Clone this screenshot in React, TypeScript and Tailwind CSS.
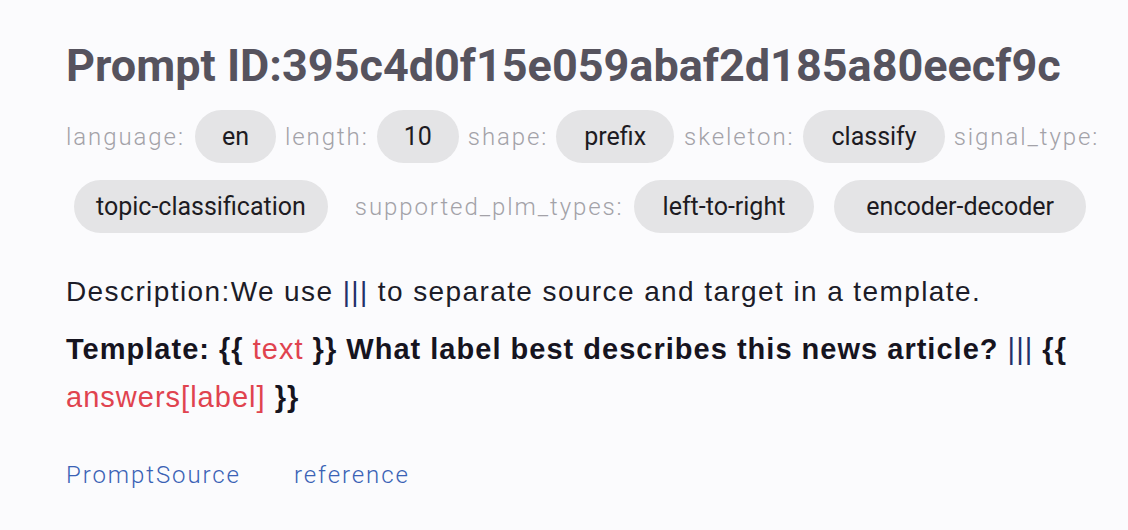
const Chip = ({ children, className = "px-[28px]" }: { children: React.ReactNode; className?: string }) => (
  <span
    className={`inline-flex h-[53px] items-center rounded-full bg-[#e4e4e6] text-[25px] text-[#1d1b22] ${className}`}
  >
    {children}
  </span>
);

const Label = ({ children, className = "" }: { children: React.ReactNode; className?: string }) => (
  <span className={`text-[24px] font-light tracking-[0.08em] text-[#a3a2a8] ${className}`}>
    {children}
  </span>
);

export default function App() {
  return (
    <div className="min-h-[530px] w-[1128px] bg-[#fbfbfd] pl-[66px] pt-[38px] font-['Roboto',sans-serif]">
      <h1 className="text-[45px] font-bold leading-[56px] text-[#56535e]">
        Prompt ID:395c4d0f15e059abaf2d185a80eecf9c
      </h1>

      {/* attributes */}
      <div className="mt-[16px] flex items-center">
        <Label>language:</Label>
        <Chip className="ml-[10px] px-[27px]">en</Chip>
        <Label className="ml-[9px]">length:</Label>
        <Chip className="ml-[8px] px-[27px]">10</Chip>
        <Label className="ml-[9px]">shape:</Label>
        <Chip className="ml-[8px] px-[28px]">prefix</Chip>
        <Label className="ml-[10px]">skeleton:</Label>
        <Chip className="ml-[9px] px-[28px]">classify</Chip>
        <Label className="ml-[9px]">signal_type:</Label>
      </div>
      <div className="mt-[17px] flex items-center">
        <Chip className="ml-[8px] px-[22px]">topic-classification</Chip>
        <Label className="ml-[27px]">supported_plm_types:</Label>
        <Chip className="ml-[10px] px-[29px]">left-to-right</Chip>
        <Chip className="ml-[20px] px-[32px]">encoder-decoder</Chip>
      </div>

      <p className="mt-[43px] font-['Liberation_Sans',Arial,sans-serif] text-[28px] leading-[32px] tracking-[0.05em] text-[#1c1c28]">
        Description:We use <span className="text-[#23306a]">|||</span> to separate source and target in a template.
      </p>

      <p className="mt-[17px] w-[1040px] font-['Liberation_Sans',Arial,sans-serif] text-[29px] font-bold leading-[48px] tracking-[0.035em] text-[#16141f]">
        Template: {"{{"} <span className="font-normal text-[#e0434f]">text</span> {"}}"} What label best describes this
        news article? <span className="font-normal text-[#23306a]">|||</span> {"{{"}{" "}
        <span className="font-normal text-[#e0434f]">answers[label]</span> {"}}"}
      </p>

      <div className="mt-[39px] flex gap-[53px] text-[24px] font-light leading-[30px] tracking-[0.08em] text-[#3a62b5]">
        <a href="#">PromptSource</a>
        <a href="#">reference</a>
      </div>
    </div>
  );
}
